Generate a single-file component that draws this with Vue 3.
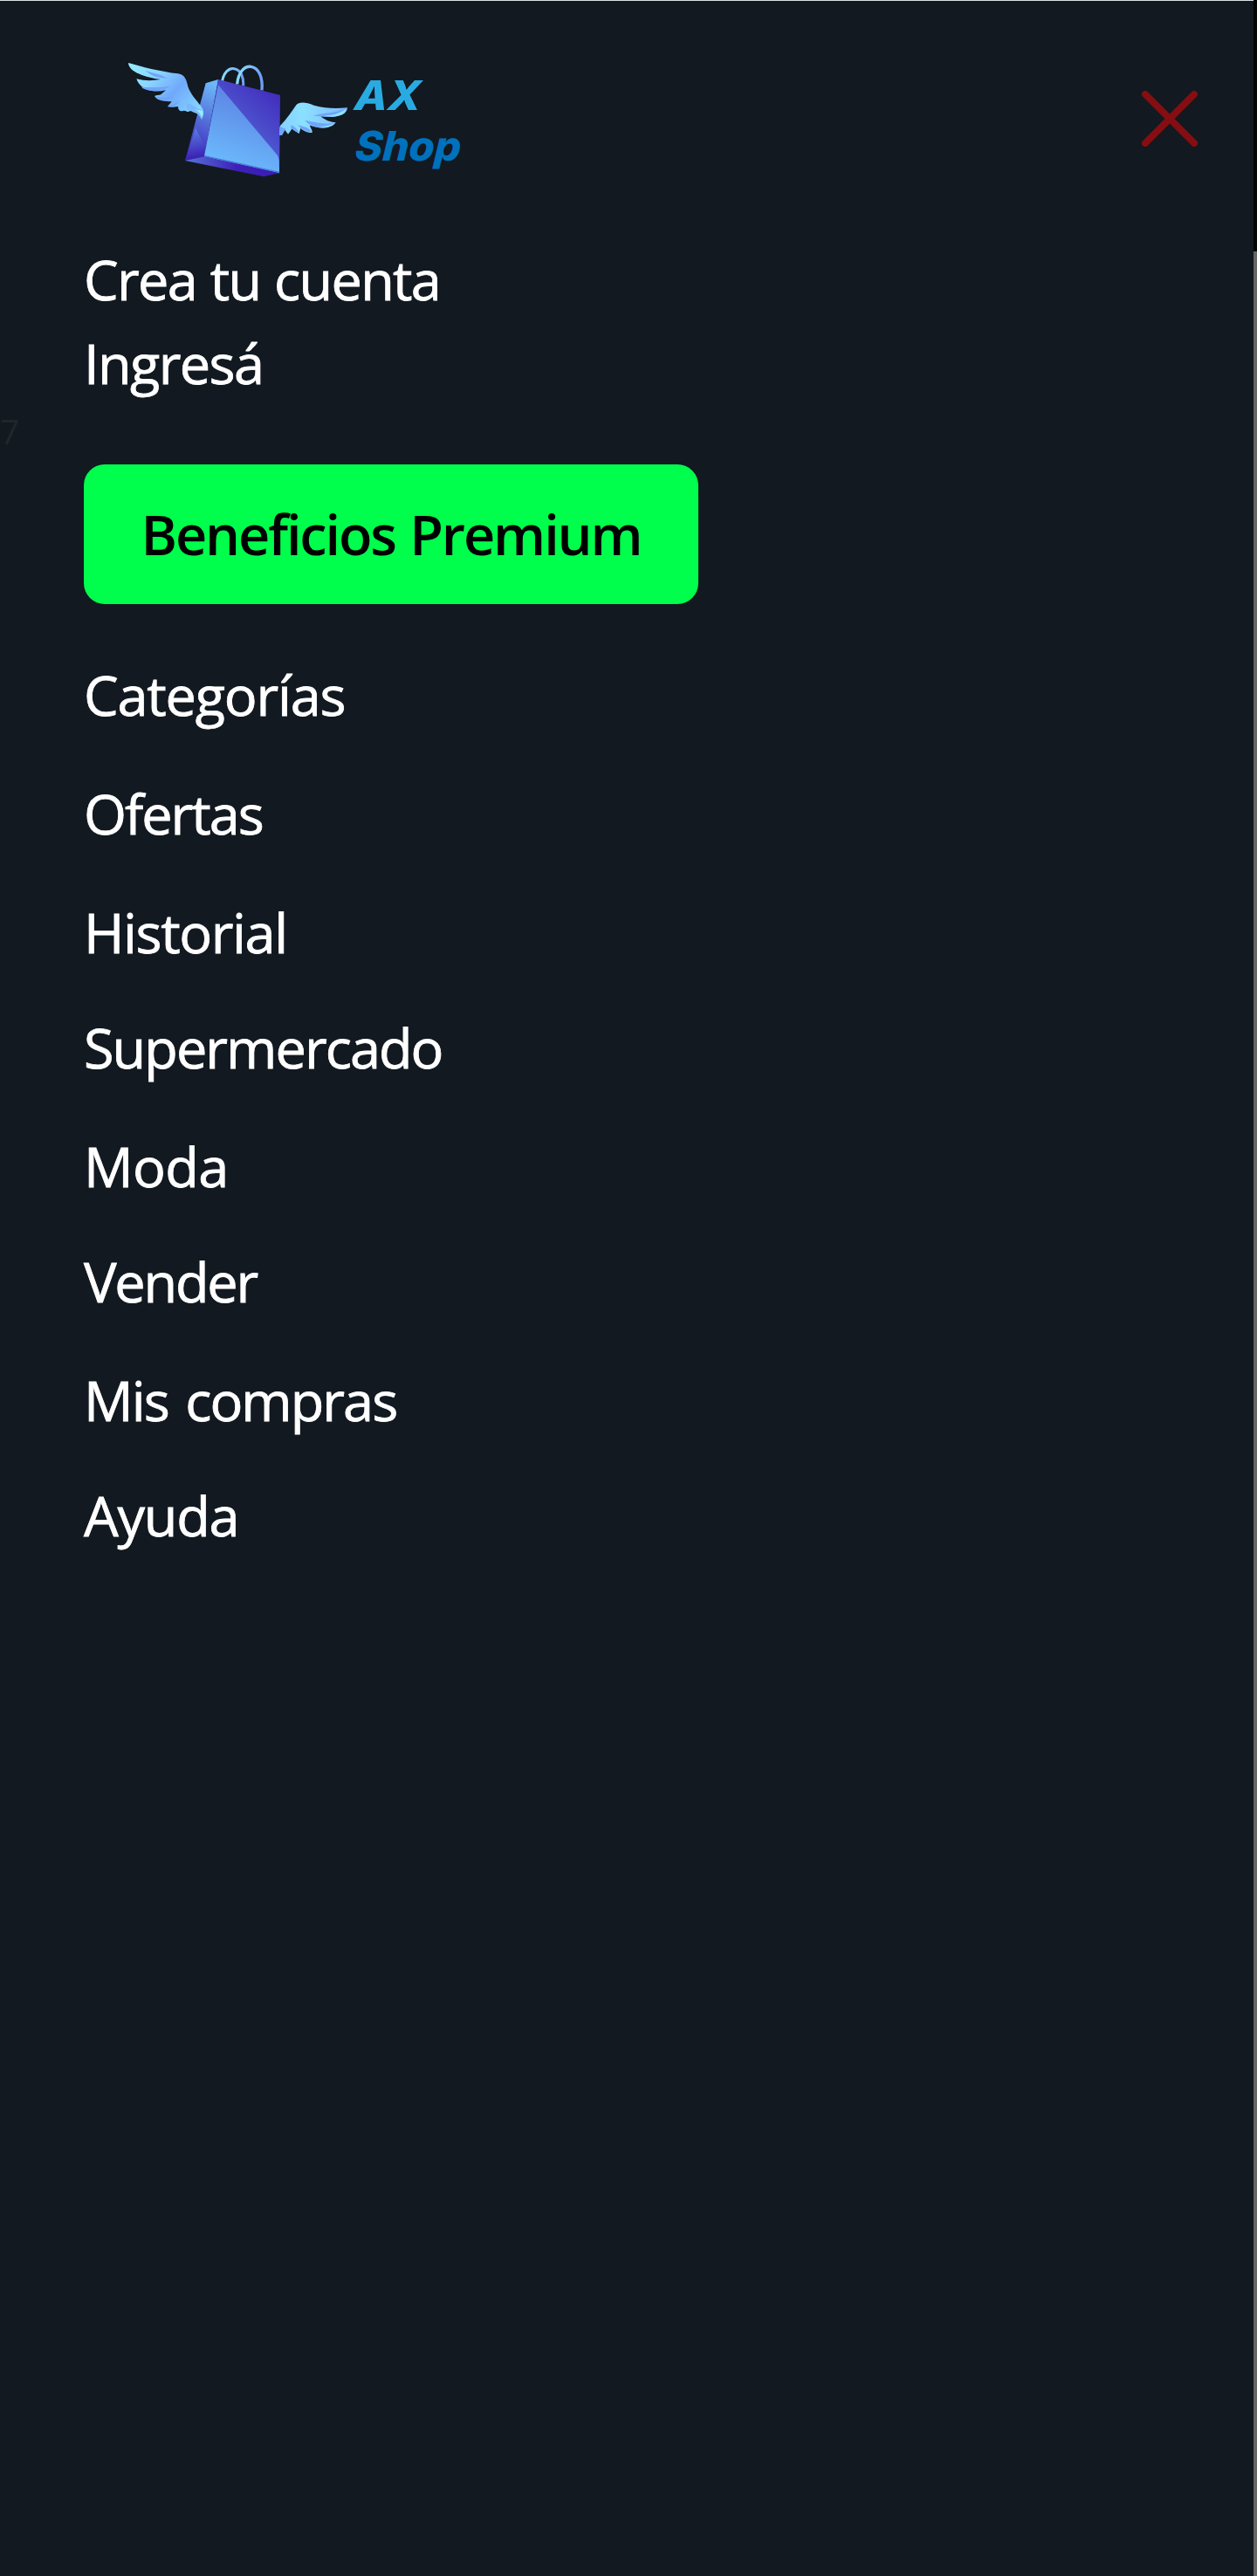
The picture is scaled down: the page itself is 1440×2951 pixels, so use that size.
<script setup>
const account = [
  { label: 'Crea tu cuenta', spacing: -1.7, wordSpacing: 1 },
  { label: 'Ingresá', spacing: -1.6, wordSpacing: 0 },
]

const links = [
  { label: 'Categorías', spacing: -1.2, wordSpacing: 0, height: 136 },
  { label: 'Ofertas', spacing: -2, wordSpacing: 0, height: 136 },
  { label: 'Historial', spacing: -1.4, wordSpacing: 0, height: 132 },
  { label: 'Supermercado', spacing: -1.95, wordSpacing: 0, height: 136 },
  { label: 'Moda', spacing: -0.6, wordSpacing: 0, height: 132 },
  { label: 'Vender', spacing: -2.2, wordSpacing: 0, height: 136 },
  { label: 'Mis compras', spacing: -1.95, wordSpacing: 5, height: 132 },
  { label: 'Ayuda', spacing: -1.3, wordSpacing: 0, height: 136 },
]

const tracking = (item) => ({
  letterSpacing: item.spacing + 'px',
  wordSpacing: item.wordSpacing + 'px',
})
</script>

<template>
  <div class="page">
    <aside class="menu">
      <header class="header">
        <svg class="logo" viewBox="0 0 1260 510" role="img" aria-label="AX Shop">
          <defs>
            <linearGradient id="wing-left" x1="0" y1="0" x2="1" y2="0.7">
              <stop offset="0" stop-color="#93edff" />
              <stop offset="0.35" stop-color="#8ad6ff" />
              <stop offset="0.65" stop-color="#70a9fb" />
              <stop offset="1" stop-color="#83d4ff" />
            </linearGradient>
            <linearGradient id="wing-right" x1="0" y1="0" x2="1" y2="0">
              <stop offset="0" stop-color="#84cfff" />
              <stop offset="0.35" stop-color="#8be0ff" />
              <stop offset="1" stop-color="#7fb9ff" />
            </linearGradient>
            <linearGradient id="front-dark" x1="1" y1="0" x2="0.35" y2="0.9">
              <stop offset="0" stop-color="#3f22b8" />
              <stop offset="1" stop-color="#5677de" />
            </linearGradient>
            <linearGradient id="front-light" x1="0.5" y1="0" x2="0.2" y2="1">
              <stop offset="0" stop-color="#5b7fe2" />
              <stop offset="1" stop-color="#6dc1ff" />
            </linearGradient>
            <linearGradient id="side" x1="0.6" y1="0" x2="0.4" y2="1">
              <stop offset="0" stop-color="#6cb9fa" />
              <stop offset="0.75" stop-color="#4746c8" />
              <stop offset="1" stop-color="#3a1cb4" />
            </linearGradient>
            <linearGradient id="side-fold" x1="0.4" y1="0" x2="0.5" y2="1">
              <stop offset="0" stop-color="#5a80e2" />
              <stop offset="1" stop-color="#3918b1" />
            </linearGradient>
            <linearGradient id="base" x1="0" y1="0" x2="1" y2="0">
              <stop offset="0" stop-color="#5674da" />
              <stop offset="0.55" stop-color="#3d20b6" />
              <stop offset="1" stop-color="#3b1bb4" />
            </linearGradient>
            <linearGradient id="handle" x1="0" y1="0" x2="1" y2="0.2">
              <stop offset="0" stop-color="#8be3ff" />
              <stop offset="1" stop-color="#6e9ff5" />
            </linearGradient>
          </defs>
          <path d="M374 128C379 98 397 84 414 86C437 89 448 114 446 145" fill="none" stroke="url(#handle)" stroke-width="9" />
          <path d="M317 136L360 123L312 388L246 402Z" fill="url(#side)" />
          <path d="M282 290L314 350L312 388L246 402Z" fill="url(#side-fold)" />
          <path d="M360 123L573 177L570 445L312 388Z" fill="url(#front-dark)" />
          <path d="M360 142L562 382Q569 391 569 402L570 445L312 388Z" fill="url(#front-light)" />
          <path d="M312 386L570 442" fill="none" stroke="#477ddd" stroke-width="4" />
          <path d="M246 402L312 388L570 445L517 457Z" fill="url(#base)" />
          <path d="M425 139C429 98 449 77 472 79C499 82 514 115 510 160" fill="none" stroke="url(#handle)" stroke-width="10" />
          <path d="M51 66C92 78 164 97 222 103C246 106 251 126 256 148C265 174 284 193 300 214C312 230 313 243 303 261C297 246 288 239 276 236C270 232 264 230 259 233C251 236 246 228 240 231C227 234 222 228 222 216C211 217 201 220 186 217C190 210 196 205 200 199C177 198 151 198 141 180C148 177 157 177 163 175C169 170 174 165 180 160C131 171 90 156 79 121C107 128 133 128 162 123C111 116 52 98 51 66Z" fill="url(#wing-left)" />
          <path d="M110 92C139 104 160 102 185 119C154 118 130 112 110 92ZM95 151C128 148 154 154 196 145C174 165 127 170 95 151ZM144 183C168 184 187 187 208 179C196 197 165 200 144 183ZM188 215C202 211 216 205 226 196C219 211 207 219 188 215Z" fill="#70a5f8" />
          <path d="M251 204C270 207 285 222 306 232Q309 244 303 259C294 240 273 230 251 226Z" fill="#79b8fc" />
          <path d="M277 225Q300 235 302 254Q309 242 306 232Z" fill="#9bedff" />
          <path d="M573 282C596 259 614 232 628 211C639 199 661 201 689 212C728 223 764 223 804 220C803 246 768 256 712 250C730 264 746 270 764 271C750 292 717 293 696 286L674 281C680 293 684 300 683 305C669 308 655 302 643 291L638 309C627 302 619 298 614 291C610 298 605 305 600 311C595 305 591 300 588 295L579 315L570 315Z" fill="url(#wing-right)" />
          <path d="M687 248C716 236 768 240 798 221C803 242 764 255 712 250ZM658 264C695 269 712 278 756 274C735 293 710 291 685 284C672 277 665 272 658 264ZM633 279C650 286 669 284 681 303C663 305 650 299 633 279ZM610 280Q626 286 638 305Q621 302 610 290ZM571 285L592 293L579 315L570 315Z" fill="#70a5f8" />
          <path d="M716 247Q766 249 799 224Q799 246 754 251ZM701 285Q731 287 758 274Q742 293 701 285Z" fill="#8de5ff" />
          <text class="brand brand-top" transform="translate(826 228) skewX(-4)" textLength="228" lengthAdjust="spacingAndGlyphs">AX</text>
          <text class="brand brand-bottom" transform="translate(828 401) skewX(-4)" textLength="364" lengthAdjust="spacingAndGlyphs">Shop</text>
        </svg>
        <button class="close" aria-label="Cerrar">
          <svg viewBox="0 0 64 64"><path d="M4 4L60 60M60 4L4 60" /></svg>
        </button>
      </header>

      <nav class="account">
        <a v-for="item in account" :key="item.label" :style="tracking(item)">{{ item.label }}</a>
      </nav>

      <button class="premium"><span>Beneficios Premium</span></button>

      <nav class="links">
        <a
          v-for="item in links"
          :key="item.label"
          :style="[tracking(item), { height: item.height + 'px' }]"
        >{{ item.label }}</a>
      </nav>
      <span class="behind">7</span>
    </aside>
    <div class="edge"><div class="edge-top"></div></div>
  </div>
</template>

<style>
body {
  margin: 0;
  background: #121920;
}
</style>

<style scoped>
.page {
  display: flex;
  width: 1440px;
  height: 2951px;
  background: #121920;
  color: #fff;
  font-family: "Open Sans", "Noto Sans", sans-serif;
  font-size: 63px;
  line-height: 96px;
  overflow: hidden;
}
.menu {
  position: relative;
  flex: 1;
  display: flex;
  flex-direction: column;
  align-items: flex-start;
  border-top: 1px solid #d9e3e4;
}
.header {
  align-self: stretch;
  display: flex;
  justify-content: space-between;
  align-items: flex-start;
  box-sizing: border-box;
  height: 271px;
  padding: 49px 64px 0 130px;
}
.logo {
  width: 420px;
  height: 170px;
}
.brand {
  font-family: "Inter", sans-serif;
  font-size: 140px;
  font-style: italic;
  font-weight: 800;
}
.brand-top {
  fill: #29abe2;
}
.brand-bottom {
  fill: #0071bc;
}
.close {
  display: block;
  width: 64px;
  height: 64px;
  margin-top: 54px;
  padding: 0;
  border: 0;
  background: none;
}
.close svg {
  display: block;
  width: 64px;
  height: 64px;
}
.close path {
  fill: none;
  stroke: #860d11;
  stroke-width: 8;
  stroke-linecap: round;
}
.account,
.links {
  display: flex;
  flex-direction: column;
  padding-left: 96px;
  -webkit-text-stroke: 0.8px #fff;
}
.account {
  height: 260px;
}
.premium {
  display: block;
  width: 704px;
  height: 160px;
  margin: 0 0 56px 96px;
  padding: 0;
  border: 0;
  border-radius: 24px;
  background: #00ff4c;
  color: #000;
  font: inherit;
  font-weight: 600;
  letter-spacing: -2.1px;
  word-spacing: 2px;
  white-space: nowrap;
}
.premium span {
  font-variant-ligatures: none;
}
.behind {
  position: absolute;
  left: 0;
  top: 464px;
  color: #21262b;
  font-size: 39px;
  line-height: 58px;
}
.edge {
  width: 4px;
  background: #656565;
}
.edge-top {
  height: 288px;
  background: #030405;
}
</style>
